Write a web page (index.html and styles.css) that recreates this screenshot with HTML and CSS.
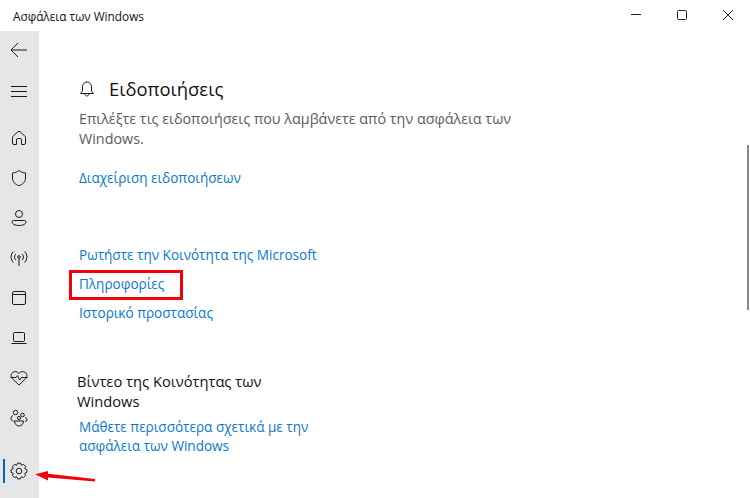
FILE: index.html
```html
<!DOCTYPE html>
<html lang="el">
<head>
<meta charset="utf-8">
<title>Ασφάλεια των Windows</title>
<link rel="stylesheet" href="styles.css">
</head>
<body>
<div class="window">
  <header class="titlebar">
    <span class="app-title">Ασφάλεια των Windows</span>
    <div class="controls">
      <svg class="ctl" viewBox="0 0 46 31"><path d="M18 14.500h10" stroke="#222" fill="none"/></svg>
      <svg class="ctl" viewBox="0 0 46 31"><rect x="18.500" y="10.500" width="9" height="9" rx="1" stroke="#222" fill="none"/></svg>
      <svg class="ctl" viewBox="0 0 46 31"><path d="M18 10l10 10M28 10l-10 10" stroke="#222" fill="none"/></svg>
    </div>
  </header>
  <div class="body">
    <nav class="sidebar">
      <svg class="nav back" viewBox="0 0 20 20"><path d="M18 10H2M9 3l-7 7 7 7" /></svg>
      <svg class="nav menu" viewBox="0 0 20 20"><path d="M2 5.500h16M2 10.500h16M2 15.500h16"/></svg>
      <svg class="nav" viewBox="0 0 20 20"><path d="M3.500 15V9.500a2 2 0 0 1 .7-1.500L9 3.700a1.500 1.500 0 0 1 2 0L15.800 8a2 2 0 0 1 .7 1.500V15a1.500 1.500 0 0 1-1.500 1.500H12.500V12a1.500 1.500 0 0 0-1.500-1.500H9A1.500 1.500 0 0 0 7.500 12v4.500H5A1.500 1.500 0 0 1 3.500 15z"/></svg>
      <svg class="nav" viewBox="0 0 20 20"><path d="M10 2.500c2 1.500 4 2.300 6.500 2.500v5c0 3.800-2.500 6.300-6.500 7.700C6 16.300 3.500 13.800 3.500 10V5C6 4.800 8 4 10 2.500z"/></svg>
      <svg class="nav" viewBox="0 0 20 20"><circle cx="10" cy="6" r="3.500"/><path d="M4.500 12.500h11a1.500 1.500 0 0 1 1.500 1.500c0 2-3 3.500-7 3.500S3 16 3 14a1.500 1.500 0 0 1 1.500-1.500z"/></svg>
      <svg class="nav" viewBox="0 0 20 20"><circle cx="10" cy="9" r="1.300"/><path d="M10 10.500V18M6.800 12a4.200 4.200 0 0 1 0-6M13.200 6a4.200 4.200 0 0 1 0 6M4.300 14.500a7.800 7.800 0 0 1 0-11M15.700 3.500a7.800 7.800 0 0 1 0 11"/></svg>
      <svg class="nav" viewBox="0 0 20 20"><rect x="3.500" y="3.500" width="13" height="13" rx="1.500"/><path d="M3.500 6.500h13"/></svg>
      <svg class="nav" viewBox="0 0 20 20"><rect x="4.500" y="4.500" width="11" height="9" rx="1"/><path d="M2.500 15.500h15"/></svg>
      <svg class="nav" viewBox="0 0 20 20"><path d="M10 17L3.500 10.800C1.500 8.800 1.800 6 3.500 4.600 5.500 3 8.300 3.300 10 5.500 11.700 3.300 14.500 3 16.500 4.600c1.700 1.400 2 4.200 0 6.200z"/><path d="M1.500 9.500H7l1.500-2 2 4.500L12.500 9.500h6"/></svg>
      <svg class="nav" viewBox="0 0 20 20"><circle cx="6.500" cy="4.500" r="2.200"/><circle cx="13.500" cy="7" r="1.800"/><circle cx="10" cy="10" r="1.600"/><path d="M4 7.500C2.500 8 2 9.500 2 11c0 1.200 1 2 2.500 2M16 9.500c1.300.3 2 1.300 2 2.500 0 .8-.5 1.300-1.300 1.300H16M5.500 13h9c0 3-2 5-4.500 5s-4.500-2-4.500-5z"/></svg>
      <div class="nav-active">
        <span class="active-bar"></span>
        <svg class="nav" viewBox="0 0 20 20"><circle cx="10" cy="10" r="2.800"/><path d="M17.880 8.610L17.880 11.390 15.730 12.370 16.550 14.590 14.590 16.550 12.370 15.730 11.390 17.880 8.610 17.880 7.630 15.730 5.410 16.550 3.450 14.590 4.270 12.370 2.120 11.390 2.120 8.610 4.270 7.630 3.450 5.410 5.410 3.450 7.630 4.270 8.610 2.120 11.390 2.120 12.370 4.270 14.590 3.450 16.550 5.410 15.730 7.630z"/></svg>
      </div>
    </nav>
    <main class="content">
      <div class="heading">
        <svg class="bell" viewBox="0 0 16 18"><path d="M1.500 13.500h13l-2-2.500V6.500a4.500 4.500 0 0 0-9 0V11zM6 13.500c0 3.300 4 3.300 4 0"/></svg>
        <h1>Ειδοποιήσεις</h1>
      </div>
      <p class="desc">Επιλέξτε τις ειδοποιήσεις που λαμβάνετε από την ασφάλεια των Windows.</p>
      <a class="link manage">Διαχείριση ειδοποιήσεων</a>
      <div class="links">
        <a class="link">Ρωτήστε την Κοινότητα της Microsoft</a>
        <a class="link">Πληροφορίες</a>
        <a class="link">Ιστορικό προστασίας</a>
      </div>
      <h2>Βίντεο της Κοινότητας των Windows</h2>
      <a class="link video">Μάθετε περισσότερα σχετικά με την ασφάλεια των Windows</a>
    </main>
    <span class="scrollbar"></span>
  </div>
  <span class="red-box"></span>
  <svg class="arrow" viewBox="0 0 60 20"><path d="M60 9L60 11.500 13 7.500 13 10.500 0 4.200 13 1 13 3.800z" fill="#f2000c"/></svg>
</div>
</body>
</html>
```
FILE: styles.css
```css
* { box-sizing: border-box; }
html, body { margin: 0; height: 100%; }
body { background: #fff; font-family: "Open Sans", "Noto Sans", sans-serif; color: #000; overflow: hidden; }
.window { position: relative; width: 750px; height: 498px; display: flex; flex-direction: column; overflow: hidden; }
.titlebar { height: 31px; flex: none; display: flex; justify-content: space-between; align-items: center; padding-left: 13px; }
.app-title { font-size: 11.800px; color: #111; }
.controls { display: flex; margin-right: -1px; }
.ctl { width: 46px; height: 31px; display: block; }
.body { flex: 1; display: flex; position: relative; min-height: 0; }
.sidebar { width: 39px; flex: none; background: #e6e6e6; display: flex; flex-direction: column; align-items: center; padding: 9px 1px 0 0; }
.nav { width: 20px; height: 20px; margin-bottom: 20px; fill: none; stroke: #1a1a1a; stroke-width: 1; display: block; flex: none; }
.back { margin-bottom: 21px; }
.menu { margin-bottom: 27px; }
.nav-active { position: relative; width: 38px; display: flex; justify-content: center; margin-top: 13px; }
.nav-active .nav { margin: 0; }
.active-bar { position: absolute; left: 3px; top: -2px; width: 2px; height: 24px; background: #0067c0; }
.content { flex: 1; padding: 43px 0 0 40px; min-width: 0; }
.heading { display: flex; align-items: center; height: 30px; }
.bell { width: 16px; height: 18px; fill: none; stroke: #1a1a1a; stroke-width: 1; margin-right: 14px; }
h1 { margin: 0; font-size: 18.400px; font-weight: 400; line-height: 30px; color: #111; }
.desc { margin: 5px 0 0; width: 445px; font-size: 14.350px; line-height: 20px; color: #5c5c5c; }
.link { display: block; font-size: 13.550px; line-height: 20px; color: #0a78cf; }
.manage { margin-top: 19px; }
.links { margin-top: 57px; display: flex; flex-direction: column; gap: 9px; }
h2 { margin: 48px 0 0 -2px; width: 225px; font-size: 14.700px; font-weight: 400; line-height: 20px; color: #111; }
.video { margin-top: 7px; width: 245px; line-height: 19px; }
.scrollbar { position: absolute; right: 1px; top: 114px; width: 2px; height: 165px; background: #8a8a8a; }
.red-box { position: absolute; left: 69px; top: 270px; width: 114px; height: 30px; border: 3px solid #f2000c; }
.arrow { position: absolute; left: 35px; top: 470px; width: 60px; height: 20px; }
```
